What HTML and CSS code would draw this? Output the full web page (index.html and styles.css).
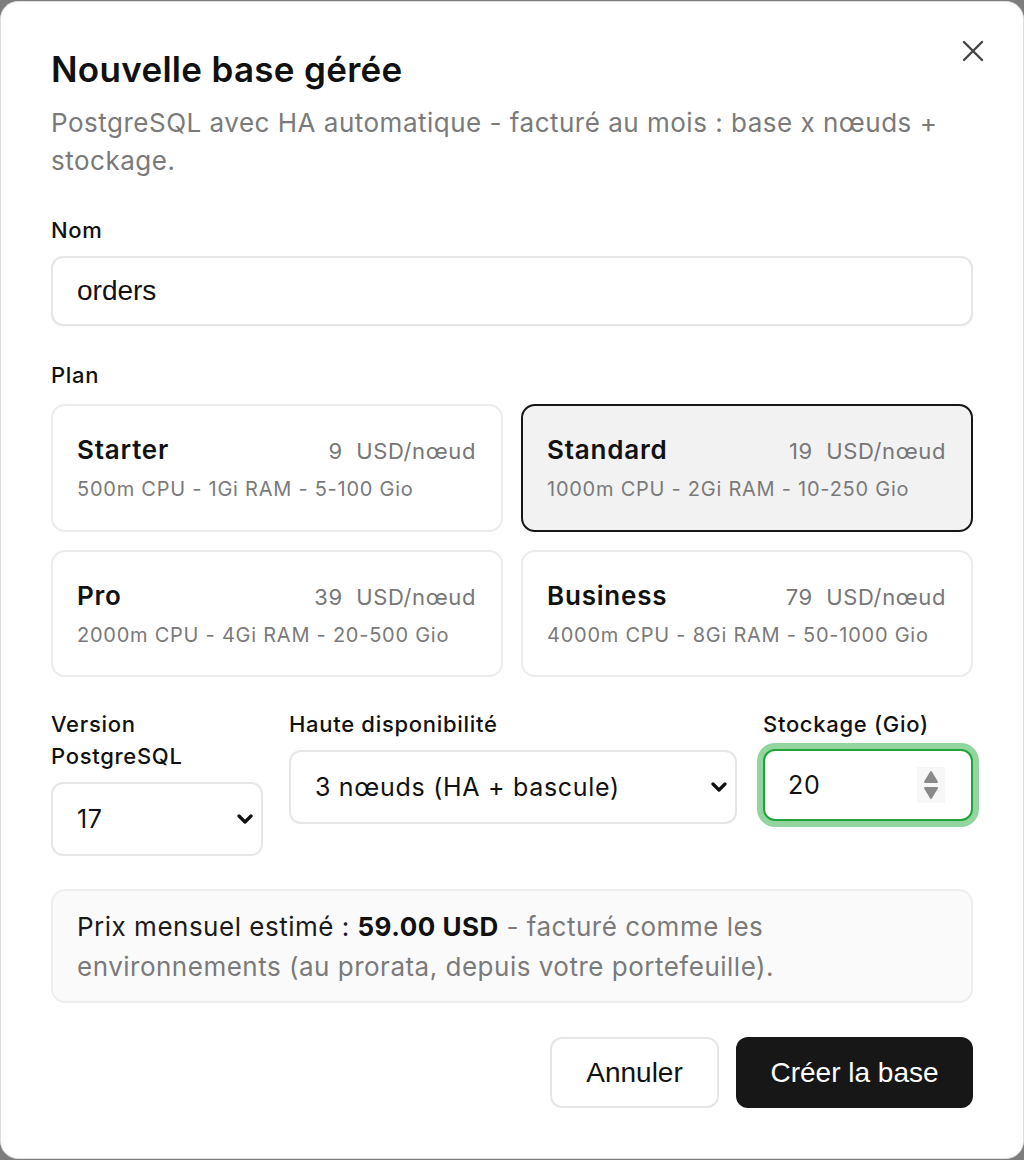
FILE: index.html
```html
<!DOCTYPE html>
<html lang="fr">
<head>
<meta charset="utf-8">
<title>Nouvelle base gérée</title>
<link rel="stylesheet" href="styles.css">
</head>
<body>
<div class="dialog" role="dialog" aria-labelledby="dlg-title">
  <button class="close" aria-label="Fermer">
    <svg width="22" height="22" viewBox="0 0 22 22"><path d="M2 2 L20 20 M20 2 L2 20" stroke="#444" stroke-width="2.4" stroke-linecap="round"/></svg>
  </button>
  <h1 id="dlg-title" class="title">Nouvelle base gérée</h1>
  <p class="subtitle">PostgreSQL avec HA automatique - facturé au mois : base x nœuds + stockage.</p>

  <div class="field field-name">
    <label class="label">Nom</label>
    <div class="input text-input">orders</div>
  </div>

  <div class="field field-plan">
    <div class="label">Plan</div>
    <div class="plans">
      <div class="plan">
        <div class="plan-head"><span class="plan-name">Starter</span><span class="plan-price">9&nbsp; USD/nœud</span></div>
        <div class="plan-spec">500m CPU - 1Gi RAM - 5-100 Gio</div>
      </div>
      <div class="plan selected">
        <div class="plan-head"><span class="plan-name">Standard</span><span class="plan-price">19&nbsp; USD/nœud</span></div>
        <div class="plan-spec">1000m CPU - 2Gi RAM - 10-250 Gio</div>
      </div>
      <div class="plan">
        <div class="plan-head"><span class="plan-name">Pro</span><span class="plan-price">39&nbsp; USD/nœud</span></div>
        <div class="plan-spec">2000m CPU - 4Gi RAM - 20-500 Gio</div>
      </div>
      <div class="plan">
        <div class="plan-head"><span class="plan-name">Business</span><span class="plan-price">79&nbsp; USD/nœud</span></div>
        <div class="plan-spec">4000m CPU - 8Gi RAM - 50-1000 Gio</div>
      </div>
    </div>
  </div>

  <div class="row3">
    <div class="field">
      <div class="label">Version PostgreSQL</div>
      <div class="input select"><span>17</span>
        <svg class="chev" width="16" height="10" viewBox="0 0 16 10"><path d="M2 2 L8 8 L14 2" fill="none" stroke="#111" stroke-width="3.2" stroke-linecap="round" stroke-linejoin="round"/></svg>
      </div>
    </div>
    <div class="field">
      <div class="label">Haute disponibilité</div>
      <div class="input select"><span>3 nœuds (HA + bascule)</span>
        <svg class="chev" width="16" height="10" viewBox="0 0 16 10"><path d="M2 2 L8 8 L14 2" fill="none" stroke="#111" stroke-width="3.2" stroke-linecap="round" stroke-linejoin="round"/></svg>
      </div>
    </div>
    <div class="field">
      <div class="label">Stockage (Gio)</div>
      <div class="input number focused"><span>20</span>
        <div class="spin">
          <svg width="18" height="34" viewBox="0 0 18 34"><path d="M3 14 L9 4 L15 14 Z" fill="#8a8a8a" stroke="#8a8a8a" stroke-width="2" stroke-linejoin="round"/><path d="M3 20 L15 20 L9 30 Z" fill="#8a8a8a" stroke="#8a8a8a" stroke-width="2" stroke-linejoin="round"/></svg>
        </div>
      </div>
    </div>
  </div>

  <div class="estimate">
    <span>Prix mensuel estimé :</span> <strong>59.00 USD</strong> <span class="muted">- facturé comme les environnements (au prorata, depuis votre portefeuille).</span>
  </div>

  <div class="actions">
    <button class="btn btn-secondary">Annuler</button>
    <button class="btn btn-primary">Créer la base</button>
  </div>
</div>
</body>
</html>
```

FILE: styles.css
```css
* { box-sizing: border-box; }
html, body { margin: 0; padding: 0; }
body {
  background: #7d7d7d;
  font-family: Inter, "Noto Sans", sans-serif;
  color: #111;
  width: 1024px;
  height: 1160px;
  overflow: hidden;
}
.dialog {
  position: relative;
  margin-top: 1px;
  height: 1158px;
  background: #fff;
  border: 1px solid #dcdcdc;
  border-radius: 18px;
  padding: 46px 50px 0 50px;
  display: flex;
  flex-direction: column;
}
.close {
  position: absolute;
  top: 38px;
  right: 39px;
  width: 22px;
  height: 22px;
  padding: 0;
  border: 0;
  background: transparent;
  display: flex;
}
.title {
  margin: 0;
  font-size: 35px;
  line-height: 42px;
  font-weight: 600;
  color: #111;
  letter-spacing: 0.3px;
}
.subtitle {
  margin: 14px 0 0 0;
  font-size: 26px;
  line-height: 38px;
  letter-spacing: 0.5px;
  color: #7a7a7a;
}
.field { display: flex; flex-direction: column; }
.label {
  font-size: 22px;
  line-height: 32px;
  font-weight: 500;
  letter-spacing: 0.7px;
  color: #111;
  margin-bottom: 10px;
}
.field-name { margin-top: 34px; }
.field-plan { margin-top: 33px; }
.field-plan .label { margin-bottom: 13px; }
.input {
  height: 70px;
  border: 2px solid #e6e6e6;
  border-radius: 12px;
  background: #fff;
  display: flex;
  align-items: center;
  padding: 0 24px;
  font-size: 25px;
  letter-spacing: 0.7px;
  color: #111;
}
.text-input {
  font-family: "Liberation Sans", Arial, sans-serif;
  font-size: 28px;
  letter-spacing: 0;
  box-shadow: 0 1px 2px rgba(0,0,0,0.04);
}
.plans {
  display: grid;
  grid-template-columns: 1fr 1fr;
  gap: 18px;
}
.plan {
  border: 2px solid #ececec;
  border-radius: 14px;
  padding: 27px 25px 0 24px;
  height: 128px;
  background: #fff;
}
.plans .plan:nth-child(n+3) { height: 127px; }
.plan.selected {
  background: #f2f2f2;
  border-color: #161616;
}
.plan-head {
  display: flex;
  justify-content: space-between;
  align-items: baseline;
  line-height: 34px;
}
.plan-name { font-size: 26px; font-weight: 600; letter-spacing: 0.8px; color: #111; }
.plan-price { font-size: 22px; letter-spacing: 0.6px; color: #777; }
.plan-spec {
  margin-top: 7px;
  font-size: 20px;
  line-height: 28px;
  letter-spacing: 0.75px;
  color: #7a7a7a;
}
.row3 {
  margin-top: 31px;
  display: grid;
  grid-template-columns: 212px 1fr 210px;
  gap: 26px;
  align-items: start;
}
.select {
  height: 74px;
  justify-content: space-between;
  padding: 0 8px 0 24px;
}
.number {
  height: 72px;
  justify-content: space-between;
  padding: 0 26px 0 23px;
  border-color: #22a33a;
  box-shadow: 0 0 0 6px #92d59f;
  margin-top: -1px;
}
.spin {
  width: 28px;
  height: 36px;
  background: #f7f7f7;
  display: flex;
  align-items: center;
  justify-content: center;
}
.estimate {
  margin-top: 33px;
  border: 2px solid #eeeeee;
  border-radius: 14px;
  background: #fafafa;
  padding: 16px 24px 14px 24px;
  font-size: 26px;
  line-height: 40px;
  letter-spacing: 0.5px;
  color: #1a1a1a;
}
.estimate strong { font-weight: 700; color: #111; }
.muted { color: #7a7a7a; }
.actions {
  margin-top: 34px;
  display: flex;
  justify-content: flex-end;
  gap: 17px;
}
.btn {
  height: 71px;
  border-radius: 12px;
  font-family: "Liberation Sans", Arial, sans-serif;
  font-size: 28px;
  padding: 0 20px;
  cursor: pointer;
}
.btn-secondary {
  background: #fff;
  border: 2px solid #e6e6e6;
  color: #111;
  width: 169px;
}
.btn-primary {
  background: #171717;
  border: 0;
  color: #fff;
  width: 237px;
}
```
